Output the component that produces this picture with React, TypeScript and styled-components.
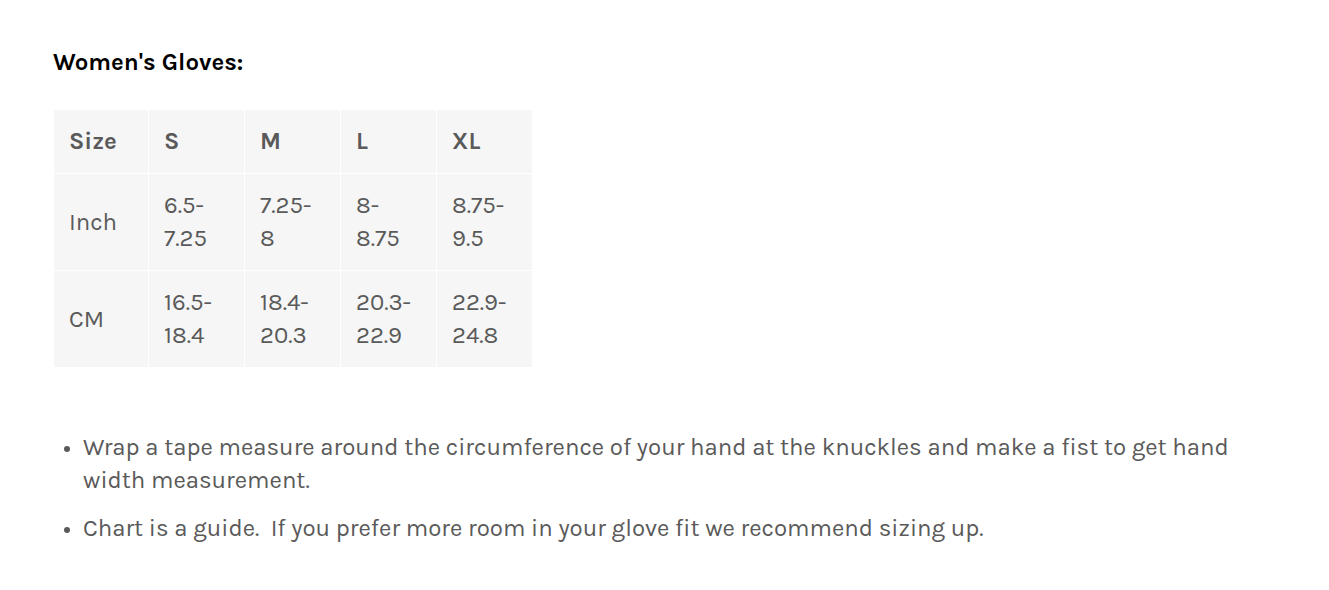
import React from "react";
import styled, { createGlobalStyle } from "styled-components";

const GlobalStyle = createGlobalStyle`
  body {
    margin: 0;
    background: #ffffff;
    font-family: 'Karla', 'Liberation Sans', sans-serif;
  }
`;

const Page = styled.main`
  padding: 46px 53px 40px;
  color: #5a5a5a;
  font-size: 24px;
  line-height: 33px;
`;

const Title = styled.h3`
  margin: 0 0 30px;
  font-size: 24px;
  line-height: 33px;
  font-weight: 700;
  color: #000000;
`;

const SizeTable = styled.table`
  border-collapse: collapse;
  table-layout: fixed;
  width: 479px;
  background: #f6f6f6;
`;

const Col = styled.col<{ $w: number }>`
  width: ${(p) => p.$w}px;
`;

const Cell = styled.td<{ $head?: boolean }>`
  box-sizing: border-box;
  padding: 15px;
  border: 1px solid #ffffff;
  vertical-align: middle;
  text-align: left;
  font-weight: ${(p) => (p.$head ? 700 : 400)};
  color: #5a5a5a;
  line-height: 33px;
`;

const Notes = styled.ul`
  margin: 63px 0 0;
  padding-left: 30px;
  list-style: disc;
`;

const Note = styled.li`
  margin-bottom: 15px;
  &::marker {
    font-size: 20px;
  }
`;

const widths = [95, 96, 96, 96, 96];
const header = ["Size", "S", "M", "L", "XL"];
const rows = [
  ["Inch", "6.5-7.25", "7.25-8", "8-8.75", "8.75-9.5"],
  ["CM", "16.5-18.4", "18.4-20.3", "20.3-22.9", "22.9-24.8"],
];

export default function App() {
  return (
    <Page>
      <GlobalStyle />
      <Title>Women's Gloves:</Title>
      <SizeTable>
        <colgroup>
          {widths.map((w, i) => (
            <Col key={i} $w={w} />
          ))}
        </colgroup>
        <tbody>
          <tr>
            {header.map((h) => (
              <Cell key={h} $head>
                {h}
              </Cell>
            ))}
          </tr>
          {rows.map((r) => (
            <tr key={r[0]}>
              {r.map((c, i) => (
                <Cell key={i}>{c}</Cell>
              ))}
            </tr>
          ))}
        </tbody>
      </SizeTable>
      <Notes>
        <Note>
          Wrap a tape measure around the circumference of your hand at the knuckles and make a fist to get hand
          width measurement.
        </Note>
        <Note>Chart is a guide.&nbsp; If you prefer more room in your glove fit we recommend sizing up.</Note>
      </Notes>
    </Page>
  );
}
